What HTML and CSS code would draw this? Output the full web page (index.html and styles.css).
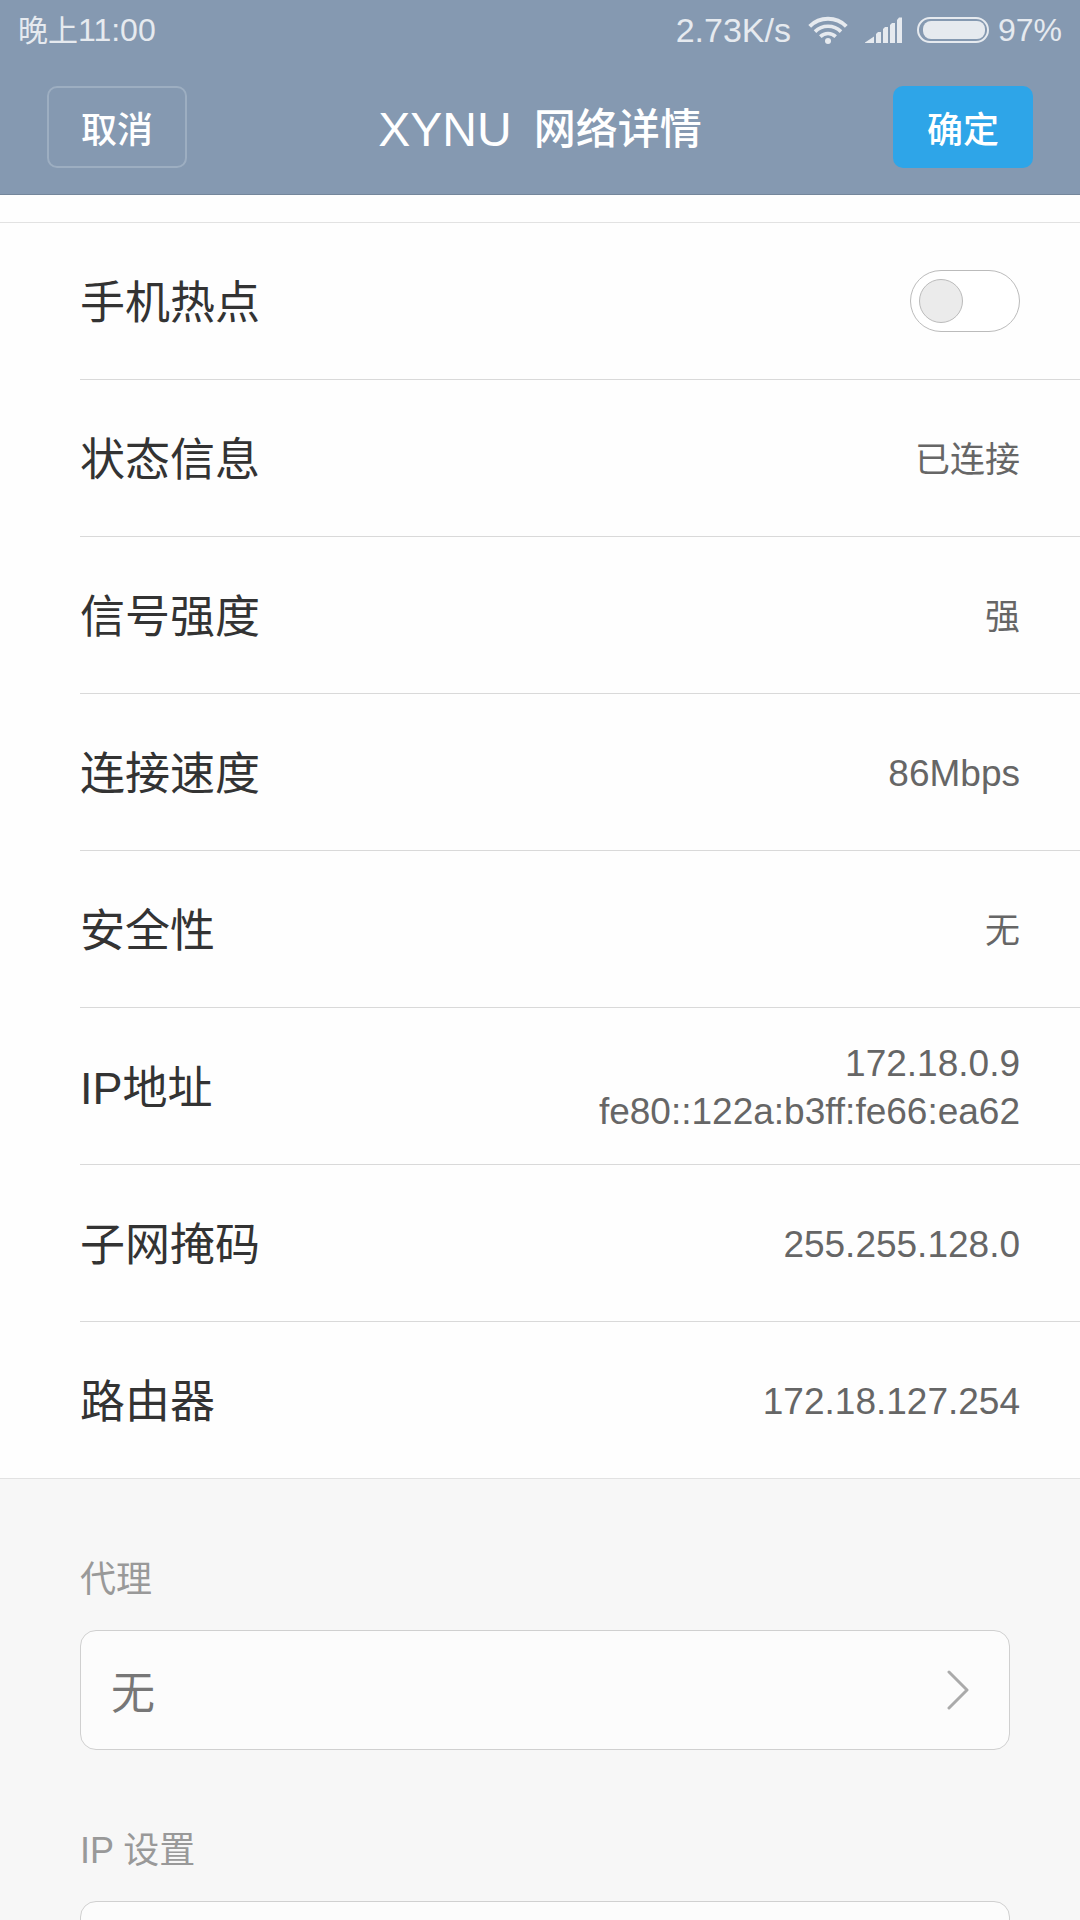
FILE: index.html
```html
<!DOCTYPE html>
<html lang="zh-CN">
<head>
  <meta charset="UTF-8" />
  <meta name="viewport" content="width=device-width, initial-scale=1.0"/>
  <title>XYNU 网络详情</title>
  <link rel="stylesheet" href="styles.css">
</head>
<body>
  <header class="top">
    <div class="status-bar">
      <span class="time"><span class="cjk">晚上</span>11:00</span>
      <div class="status-icons">
        <span class="speed">2.73K/s</span>
        <svg class="wifi" width="40" height="28" viewBox="0 0 40 28" fill="none" stroke="currentColor" stroke-width="4">
          <path d="M1.7 10.3a26 26 0 0 1 36.6 0"/>
          <path d="M7 15.6a18.500 18.500 0 0 1 26 0" stroke-width="3.600"/>
          <path d="M12.300 20.600a11 11 0 0 1 15.400 0" stroke-width="3.600"/>
          <circle cx="20" cy="25" r="3" fill="currentColor" stroke="none"/>
        </svg>
        <svg class="signal" width="38" height="26" viewBox="0 0 38 26" fill="currentColor">
          <path d="M0 25.500L9 19.500V26H0z"/>
          <path d="M11 17l2-2h3v11h-5z"/>
          <path d="M18 12l2-2h3v16h-5z"/>
          <path d="M25 8l2-2h3v20h-5z"/>
          <path d="M32 3l2-2.500h3V26h-5z"/>
        </svg>
        <svg class="battery" width="72" height="26" viewBox="0 0 72 26">
          <rect x="1" y="1" width="70" height="24" rx="12" fill="none" stroke="currentColor" stroke-width="2"/>
          <rect x="6" y="4" width="62" height="18" rx="8" fill="currentColor"/>
        </svg>
        <span class="percent">97%</span>
      </div>
    </div>
    <div class="title-bar">
      <button type="button" class="btn btn-cancel">取消</button>
      <h1><span class="ssid">XYNU</span> <span>网络详情</span></h1>
      <button type="button" class="btn btn-ok">确定</button>
    </div>
  </header>

  <main>
    <ul class="details">
      <li class="row">
        <label class="name" for="hotspot">手机热点</label>
        <input type="checkbox" class="switch" id="hotspot">
      </li>
      <li class="row">
        <span class="name">状态信息</span>
        <span class="value text">已连接</span>
      </li>
      <li class="row">
        <span class="name">信号强度</span>
        <span class="value text">强</span>
      </li>
      <li class="row">
        <span class="name">连接速度</span>
        <span class="value">86Mbps</span>
      </li>
      <li class="row">
        <span class="name">安全性</span>
        <span class="value text">无</span>
      </li>
      <li class="row">
        <span class="name">IP地址</span>
        <span class="value">172.18.0.9<br>fe80::122a:b3ff:fe66:ea62</span>
      </li>
      <li class="row">
        <span class="name">子网掩码</span>
        <span class="value">255.255.128.0</span>
      </li>
      <li class="row">
        <span class="name">路由器</span>
        <span class="value">172.18.127.254</span>
      </li>
    </ul>

    <section class="settings">
      <h2 id="proxy-label">代理</h2>
      <button type="button" class="picker" aria-labelledby="proxy-label proxy-value">
        <span id="proxy-value">无</span>
        <svg width="22" height="40" viewBox="0 0 22 40" fill="none" stroke="currentColor" stroke-width="3" stroke-linecap="round" stroke-linejoin="round">
          <path d="M2 2l18 18L2 38"/>
        </svg>
      </button>
      <h2 id="ip-label">IP 设置</h2>
      <button type="button" class="picker" aria-labelledby="ip-label"></button>
    </section>
  </main>
</body>
</html>
```
FILE: styles.css
```css
*,
*::before {
  box-sizing: border-box;
}

body {
  display: flex;
  flex-direction: column;
  height: 100vh;
  margin: 0;
  font-family: "Liberation Sans", "Noto Sans CJK SC", sans-serif;
  background-color: #fefefe;
  color: #333;
}

button {
  font-family: inherit;
  cursor: pointer;
}

/* header */

.top {
  flex: none;
  background-color: #8599b1;
  border-bottom: 1px solid #74869b;
  color: white;
}

.status-bar {
  display: flex;
  justify-content: space-between;
  align-items: center;
  height: 60px;
  padding: 0 18px;
  font-size: 32px;
  color: #e6eaef;
}

.time {
  padding-bottom: 4px;
}

.time .cjk {
  font-size: 30px;
}

.speed {
  font-size: 34px;
}

.status-icons {
  display: flex;
  align-items: center;
}

.wifi {
  margin-left: 17px;
}

.signal {
  margin-left: 17px;
}

.battery {
  margin: 0 9px 0 14px;
}

.title-bar {
  display: flex;
  justify-content: space-between;
  align-items: center;
  height: 134px;
  padding: 0 47px;
}

.btn {
  width: 140px;
  height: 82px;
  border: 2px solid transparent;
  border-radius: 10px;
  padding: 0;
  background: none;
  font-size: 36px;
  font-weight: 500;
  color: white;
}

.btn-cancel {
  border-color: #9daec1;
}

.btn-ok {
  background-color: #2ea5e8;
}

h1 {
  display: flex;
  align-items: center;
  gap: 22px;
  margin: 0;
  padding-top: 6px;
  font-size: 42px;
  line-height: 60px;
  font-weight: 500;
}

.ssid {
  font-size: 48px;
  font-weight: 400;
}

/* network details */

main {
  flex: 1;
  overflow-y: auto;
  scrollbar-width: none;
  background-color: #f7f7f7;
}

.details {
  margin: 0;
  padding: 27px 0 0;
  list-style: none;
  background-color: #fefefe;
  border-bottom: 1px solid #e2e2e2;
}

.details::before {
  content: "";
  display: block;
  height: 1px;
  background-color: #e2e2e2;
}

.row {
  display: flex;
  justify-content: space-between;
  align-items: center;
  height: 157px;
  margin-left: 80px;
  padding-right: 60px;
  border-bottom: 1px solid #d9d9d9;
}

.row:last-child {
  height: 156px;
  border-bottom: none;
}

.name {
  padding-bottom: 4px;
  font-size: 45px;
}

.value {
  padding-top: 4px;
  font-size: 37px;
  line-height: 48px;
  text-align: right;
  color: #666;
}

.value.text {
  font-size: 35px;
}

.switch {
  appearance: none;
  width: 110px;
  height: 62px;
  margin: 0;
  padding: 8px;
  border: 1px solid #bbb;
  border-radius: 31px;
  background-color: white;
}

.switch::before {
  content: "";
  display: block;
  width: 44px;
  height: 44px;
  border: 1px solid #bbb;
  border-radius: 50%;
  background-color: #ebebeb;
}

.switch:checked::before {
  margin-left: auto;
}

/* proxy and ip settings */

.settings {
  padding: 0 70px 76px 80px;
}

h2 {
  margin: 0;
  padding: 77px 0 26px;
  font-size: 36px;
  line-height: 48px;
  font-weight: 400;
  color: #999;
}

.picker {
  display: flex;
  justify-content: space-between;
  align-items: center;
  width: 100%;
  height: 120px;
  padding: 0 40px 0 30px;
  border: 1px solid #d0d0d0;
  border-radius: 16px;
  background-color: #fcfcfc;
  font-size: 44px;
  color: #777;
}

.picker svg {
  color: #aaa;
}
```
